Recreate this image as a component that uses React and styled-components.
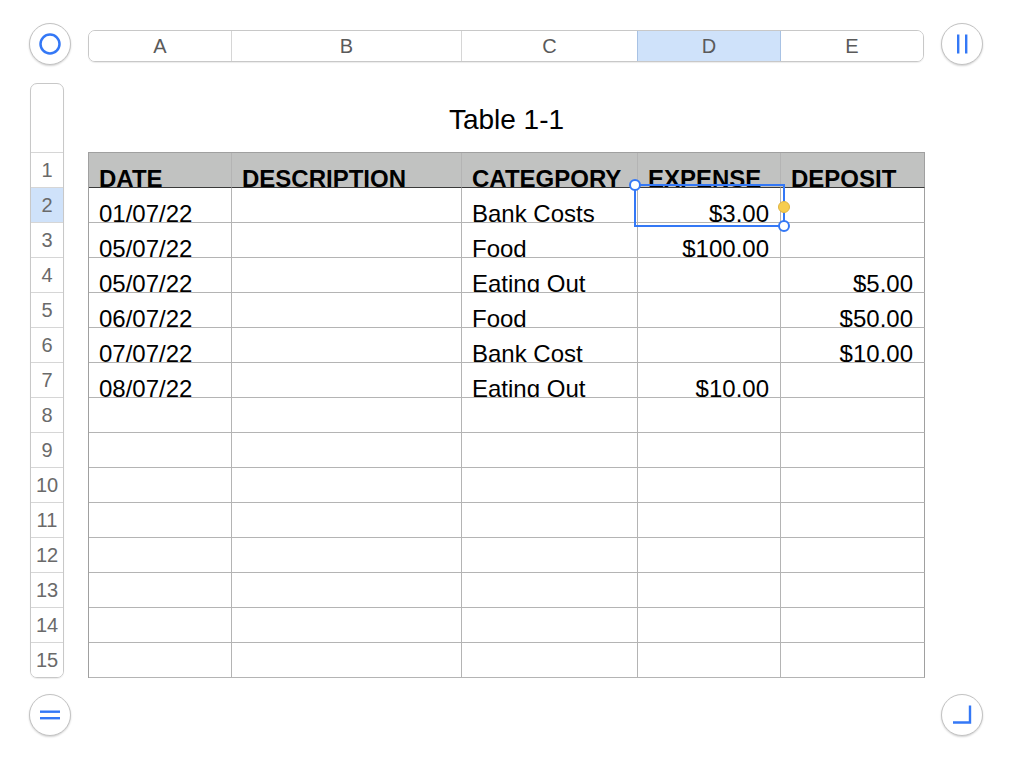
import styled, { createGlobalStyle } from 'styled-components';

const GlobalStyle = createGlobalStyle`
  body {
    margin: 0;
    background: #ffffff;
    font-family: "Liberation Sans", Arial, sans-serif;
  }
`;

const COLUMNS = [
  { label: 'A', width: 143 },
  { label: 'B', width: 230 },
  { label: 'C', width: 176 },
  { label: 'D', width: 143, selected: true },
  { label: 'E', width: 144 },
];

const HEADERS = ['DATE', 'DESCRIPTION', 'CATEGPORY', 'EXPENSE', 'DEPOSIT'];

const ROWS = [
  ['01/07/22', '', 'Bank Costs', '$3.00', ''],
  ['05/07/22', '', 'Food', '$100.00', ''],
  ['05/07/22', '', 'Eating Out', '', '$5.00'],
  ['06/07/22', '', 'Food', '', '$50.00'],
  ['07/07/22', '', 'Bank Cost', '', '$10.00'],
  ['08/07/22', '', 'Eating Out', '$10.00', ''],
  ...Array.from({ length: 8 }, () => ['', '', '', '', '']),
];

const gridCols = COLUMNS.map((c) => `${c.width}px`).join(' ');
// the bar has a border on both sides, so its last column is one pixel narrower
const barCols = COLUMNS.map((c, i) => `${i === COLUMNS.length - 1 ? c.width - 2 : c.width}px`).join(' ');

const Page = styled.div`
  width: 1012px;
  height: 762px;
  box-sizing: border-box;
  padding: 23px 0 0 29px;
`;

const TopRow = styled.div`
  display: flex;
  align-items: flex-start;
  gap: 17px;
`;

const RoundButton = styled.div`
  width: 42px;
  height: 42px;
  box-sizing: border-box;
  border-radius: 50%;
  border: 1px solid #c3c3c3;
  background: #fff;
  box-shadow: 0 1px 2px rgba(0, 0, 0, 0.18);
  display: flex;
  align-items: center;
  justify-content: center;
  flex-shrink: 0;
`;

const ColumnBar = styled.div`
  margin-top: 7px;
  display: grid;
  grid-template-columns: ${barCols};
  border: 1px solid #c8c8c8;
  border-radius: 7px;
  overflow: hidden;
  height: 32px;
  box-sizing: border-box;
  box-shadow: 0 1px 1px rgba(0, 0, 0, 0.08);
`;

const ColumnLabel = styled.div`
  display: flex;
  align-items: center;
  justify-content: center;
  font-size: 20px;
  color: #5a5a5a;
  border-right: 1px solid ${(p) => (p.$selected ? '#a8c2e4' : '#d6d6d6')};
  border-left: ${(p) => (p.$selected ? '1px solid #a8c2e4' : 'none')};
  margin-left: ${(p) => (p.$selected ? '-1px' : '0')};
  background: ${(p) => (p.$selected ? '#cfe2fa' : '#fff')};
  &:last-child {
    border-right: none;
  }
`;

const Body = styled.div`
  display: flex;
  align-items: flex-start;
  margin-top: 18px;
`;

const RowHeader = styled.div`
  margin-left: 1px;
  width: 34px;
  box-sizing: border-box;
  border: 1px solid #c8c8c8;
  border-radius: 7px;
  overflow: hidden;
  display: flex;
  flex-direction: column;
  box-shadow: 0 1px 1px rgba(0, 0, 0, 0.08);
`;

const RowHeaderTop = styled.div`
  height: 68px;
`;

const RowNumber = styled.div`
  height: 34px;
  border-top: 1px solid #d6d6d6;
  display: flex;
  align-items: center;
  justify-content: center;
  font-size: 20px;
  color: #6a6a6a;
  background: ${(p) => (p.$selected ? '#cfe2fa' : '#fff')};
`;

const Sheet = styled.div`
  margin-left: 24px;
  display: flex;
  flex-direction: column;
`;

const Title = styled.div`
  height: 69px;
  display: flex;
  align-items: center;
  justify-content: center;
  font-size: 28px;
  color: #000;
  padding-top: 4px;
  box-sizing: border-box;
`;

const TableWrap = styled.div`
  position: relative;
`;

const Table = styled.div`
  display: grid;
  grid-template-columns: ${gridCols};
  border-top: 1px solid #a0a0a0;
  border-left: 1px solid #a0a0a0;
`;

const Cell = styled.div`
  box-sizing: border-box;
  height: 35px;
  overflow: hidden;
  padding: 14px 11px 0 10px;
  border-right: 1px solid ${(p) => (p.$last ? '#a0a0a0' : '#b4b4b4')};
  border-bottom: 1px solid ${(p) => (p.$head ? '#3a3a3a' : '#b4b4b4')};
  background: ${(p) => (p.$head ? '#c1c2c1' : '#fff')};
  font-size: 24px;
  line-height: 24px;
  font-weight: ${(p) => (p.$head ? 700 : 400)};
  color: #000;
  text-align: ${(p) => (p.$right ? 'right' : 'left')};
  white-space: nowrap;
`;

const Selection = styled.div`
  position: absolute;
  left: 546px;
  top: 32px;
  width: 151px;
  height: 43px;
  box-sizing: border-box;
  border: 2px solid #3478f6;
  pointer-events: none;
`;

const Handle = styled.div`
  position: absolute;
  width: 12px;
  height: 12px;
  box-sizing: border-box;
  border-radius: 50%;
  background: #fff;
  border: 2px solid #3478f6;
  left: ${(p) => (p.$end ? 'auto' : '-7px')};
  right: ${(p) => (p.$end ? '-7px' : 'auto')};
  top: ${(p) => (p.$end ? 'auto' : '-7px')};
  bottom: ${(p) => (p.$end ? '-7px' : 'auto')};
`;

const FillDot = styled.div`
  position: absolute;
  right: -7px;
  top: 15px;
  width: 12px;
  height: 12px;
  box-sizing: border-box;
  border-radius: 50%;
  background: #f7cd4f;
  border: 1px solid #deb342;
`;

const BottomRow = styled.div`
  display: flex;
  justify-content: space-between;
  width: 954px;
  margin-top: 16px;
`;

const isMoney = (v) => v.startsWith('$');

export default function App() {
  return (
    <Page>
      <GlobalStyle />
      <TopRow>
        <RoundButton>
          <svg width="24" height="24" viewBox="0 0 24 24">
            <circle cx="12" cy="12" r="9.5" fill="none" stroke="#3478f6" strokeWidth="2.5" />
          </svg>
        </RoundButton>
        <ColumnBar>
          {COLUMNS.map((c) => (
            <ColumnLabel key={c.label} $selected={c.selected}>
              {c.label}
            </ColumnLabel>
          ))}
        </ColumnBar>
        <RoundButton>
          <svg width="24" height="24" viewBox="0 0 24 24">
            <rect x="7" y="2.5" width="2.4" height="19" fill="#3478f6" />
            <rect x="15" y="2.5" width="2.4" height="19" fill="#3478f6" />
          </svg>
        </RoundButton>
      </TopRow>

      <Body>
        <RowHeader>
          <RowHeaderTop />
          {Array.from({ length: 15 }, (_, i) => (
            <RowNumber key={i} $selected={i === 1}>
              {i + 1}
            </RowNumber>
          ))}
        </RowHeader>

        <Sheet>
          <Title>Table 1-1</Title>
          <TableWrap>
            <Table>
              {HEADERS.map((h, i) => (
                <Cell key={h} $head $last={i === 4}>
                  {h}
                </Cell>
              ))}
              {ROWS.map((row, r) =>
                row.map((v, c) => (
                  <Cell key={`${r}-${c}`} $right={isMoney(v)} $last={c === 4}>
                    {v}
                  </Cell>
                ))
              )}
            </Table>
            <Selection>
              <Handle />
              <FillDot />
              <Handle $end />
            </Selection>
          </TableWrap>
        </Sheet>
      </Body>

      <BottomRow>
        <RoundButton>
          <svg width="24" height="24" viewBox="0 0 24 24">
            <rect x="2" y="7.5" width="20" height="2.4" fill="#3478f6" />
            <rect x="2" y="14" width="20" height="2.4" fill="#3478f6" />
          </svg>
        </RoundButton>
        <RoundButton>
          <svg width="24" height="24" viewBox="0 0 24 24">
            <path d="M20 2.5 V19.5 H3" fill="none" stroke="#3478f6" strokeWidth="2.4" />
          </svg>
        </RoundButton>
      </BottomRow>
    </Page>
  );
}
